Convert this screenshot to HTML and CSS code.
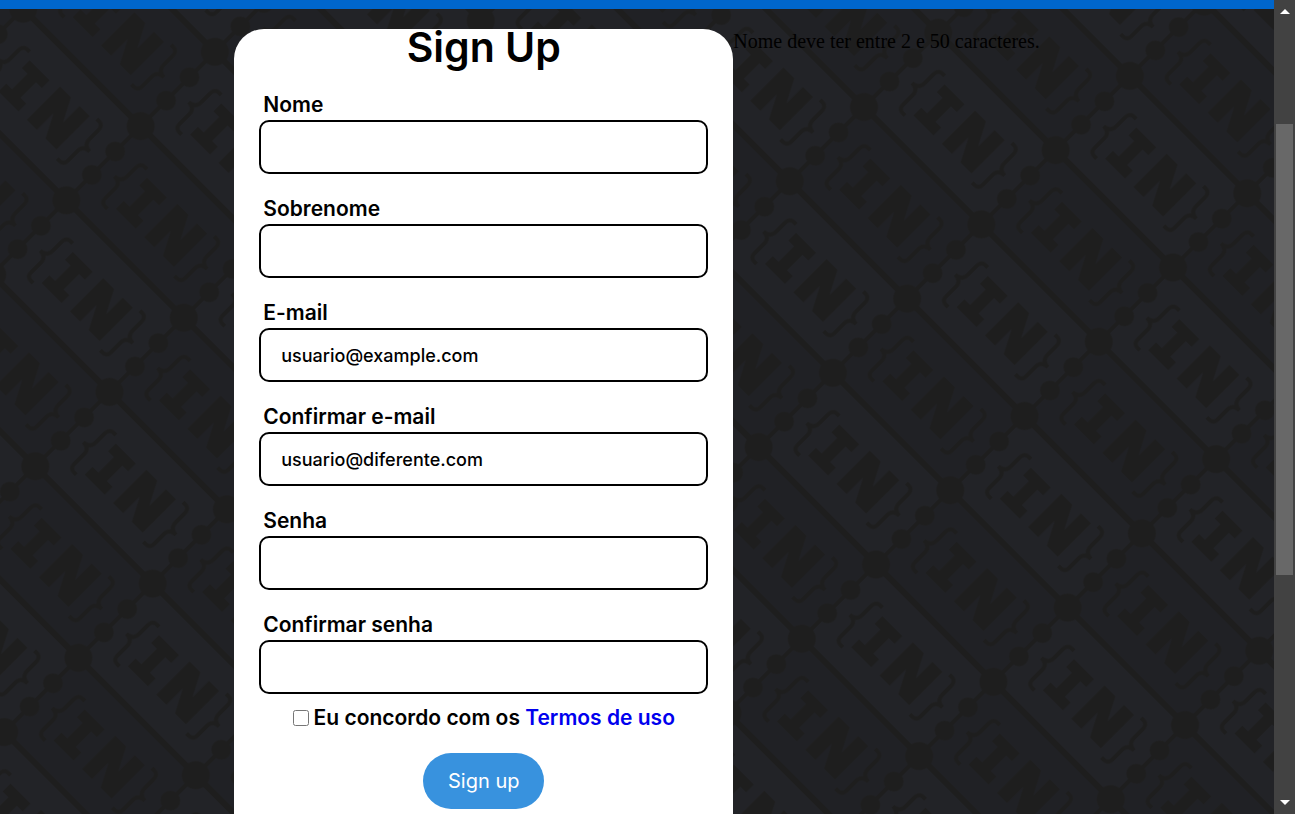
FILE: index.html
```html
<!DOCTYPE html>
<html lang="pt-BR">
<head>
<meta charset="utf-8">
<title>Sign Up</title>
<link rel="stylesheet" href="styles.css">
</head>
<body>
<div class="window">
  <div class="page">
    <svg class="backdrop" aria-hidden="true">
      <defs>
        <g id="cell">
          <path class="stroke" d="M0 0H166"/>
          <path class="link" d="M0 0V105"/>
          <circle cx="0" cy="36" r="10"/>
          <circle cx="0" cy="69" r="10"/>
          <path class="brace" d="M35 26H32Q26 26 26 33V45Q26 54 17 54Q26 54 26 62V76Q26 82 32 82H35"/>
          <path class="brace" d="M130 26H133Q139 26 139 33V45Q139 54 148 54Q139 54 139 62V76Q139 82 133 82H130"/>
          <text class="mono" x="55" y="74">I</text>
          <text class="wide" x="102" y="74">N</text>
        </g>
        <g id="nodes">
          <circle cx="0" cy="0" r="14"/>
          <circle cx="166" cy="0" r="14"/>
          <circle cx="332" cy="0" r="14"/>
          <circle cx="0" cy="105" r="14"/>
          <circle cx="166" cy="105" r="14"/>
          <circle cx="332" cy="105" r="14"/>
          <circle cx="0" cy="210" r="14"/>
          <circle cx="166" cy="210" r="14"/>
          <circle cx="332" cy="210" r="14"/>
        </g>
        <pattern id="weave" width="332" height="210" patternUnits="userSpaceOnUse" patternTransform="translate(864 107) rotate(45)">
          <rect class="light" width="332" height="210"/>
          <rect class="dark" width="166" height="105"/>
          <rect class="dark" x="166" y="105" width="166" height="105"/>
          <use href="#cell"/>
          <use href="#cell" x="166"/>
          <use href="#cell" y="105"/>
          <use href="#cell" x="166" y="105"/>
          <use href="#cell" x="332"/>
          <use href="#cell" x="332" y="105"/>
          <use href="#cell" y="210"/>
          <use href="#cell" x="166" y="210"/>
          <use href="#nodes"/>
        </pattern>
      </defs>
      <rect width="100%" height="100%" fill="url(#weave)"/>
    </svg>
    <header class="topbar"></header>
    <main class="content">
      <form class="card">
        <h1 class="title">Sign Up</h1>
        <div class="field"><label for="nome">Nome</label><input id="nome" type="text"></div>
        <div class="field"><label for="sobrenome">Sobrenome</label><input id="sobrenome" type="text"></div>
        <div class="field"><label for="email">E-mail</label><input id="email" type="email" value="usuario@example.com"></div>
        <div class="field"><label for="email2">Confirmar e-mail</label><input id="email2" type="email" value="usuario@diferente.com"></div>
        <div class="field"><label for="senha">Senha</label><input id="senha" type="password"></div>
        <div class="field"><label for="senha2">Confirmar senha</label><input id="senha2" type="password"></div>
        <div class="terms">
          <input id="termos" type="checkbox">
          <label for="termos">Eu concordo com os <a href="#termos">Termos de uso</a></label>
        </div>
        <button class="submit" type="button">Sign up</button>
      </form>
      <p class="message">Nome deve ter entre 2 e 50 caracteres.</p>
    </main>
  </div>
  <div class="scrollbar" aria-hidden="true">
    <svg class="arrow" viewBox="0 0 10 5"><path d="M0 5L5 0L10 5Z"/></svg>
    <div class="track"><div class="before"></div><div class="thumb"></div><div class="after"></div></div>
    <svg class="arrow" viewBox="0 0 10 5"><path d="M0 0L5 5L10 0Z"/></svg>
  </div>
</div>
</body>
</html>
```
FILE: styles.css
```css
* { box-sizing: border-box; }
body { margin: 0; }
.window {
  display: grid;
  grid-template-columns: 1fr 21px;
  height: 100vh;
  overflow: hidden;
}
.page {
  position: relative;
  overflow: hidden;
  background: #212226;
}
.backdrop {
  position: absolute;
  inset: 0;
  width: 100%;
  height: 100%;
  fill: #1e1e1e;
}
.light { fill: #222327; }
.dark { fill: #202125; }
.stroke { stroke: #1e1e1e; stroke-width: 6; }
.link { stroke: #1e1e1e; stroke-width: 4; }
.brace { fill: none; stroke: #1e1e1e; stroke-width: 4; }
.mono, .wide { stroke: #1e1e1e; stroke-width: 4; text-anchor: middle; }
.mono { font: bold 56px "DejaVu Sans Mono", monospace; }
.wide { font: bold 58px "DejaVu Sans", sans-serif; }
.topbar { position: relative; height: 9px; background: #0066cc; }
.content {
  position: relative;
  display: flex;
  justify-content: center;
  align-items: flex-start;
  padding-top: 20px;
}
.card {
  display: flex;
  flex-direction: column;
  width: 499px;
  padding: 0 25px 40px;
  background: #fff;
  border-radius: 30px;
  color: #000;
  font: 600 21px/30px Inter, "Open Sans", sans-serif;
}
.title {
  margin: 0 0 25px;
  font-size: 41px;
  font-weight: 600;
  line-height: 36px;
  text-align: center;
}
.field { display: flex; flex-direction: column; margin-bottom: 20px; }
.field label { padding-left: 4px; }
.field input {
  width: 100%;
  height: 54px;
  padding: 0 20px;
  border: 2px solid #000;
  border-radius: 10px;
  background: #fff;
  color: #000;
  font: 500 18px/24px Inter, "Open Sans", sans-serif;
}
.terms {
  display: flex;
  justify-content: center;
  align-items: center;
  gap: 5px;
  margin: -11px 0 20px;
}
.terms input { width: 16px; height: 16px; margin: 0; }
.terms a { color: #0000ee; text-decoration: none; }
.submit {
  align-self: center;
  padding: 13px 25px;
  border: 0;
  border-radius: 28px;
  background: #3892de;
  color: #fff;
  font: 400 20px/30px Inter, "Open Sans", sans-serif;
}
.message {
  margin: 0;
  color: #000;
  font: 20px/24px "Liberation Serif", serif;
}
.scrollbar {
  display: flex;
  flex-direction: column;
  align-items: center;
  padding: 9px 2px;
  background: #424242;
}
.arrow { width: 10px; height: 5px; fill: #fff; }
.track { display: flex; flex-direction: column; flex: 1; align-self: stretch; }
.before { flex: 110; }
.thumb { flex: 451; background: #686868; }
.after { flex: 225; }
```
